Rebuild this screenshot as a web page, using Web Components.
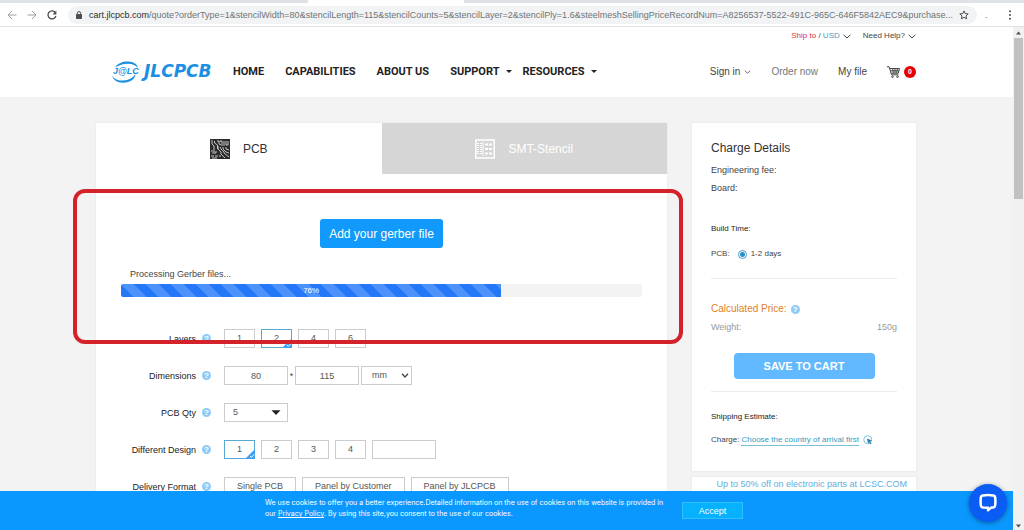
<!DOCTYPE html>
<html lang="en">
<head>
<meta charset="utf-8">
<title>JLCPCB quote</title>
<style>
html,body{margin:0;height:100%}
body{font-family:"Liberation Sans",Arial,sans-serif;font-size:9px;line-height:12px;color:#444;background:#f3f3f3}
</style>
</head>
<body>
<quote-app></quote-app>

<script>
const define = (name, html, setup) => {
  const t = document.createElement('template');
  t.innerHTML = html;
  customElements.define(name, class extends HTMLElement {
    constructor() {
      super();
      this.attachShadow({mode: 'open'}).append(t.content.cloneNode(true));
    }
    connectedCallback() {
      if (setup && !this.ready) { this.ready = true; setup(this, this.shadowRoot); }
    }
  });
};

define('help-tip', `
<style>
:host{display:block;width:9px;height:9px}
button{display:block;width:100%;height:100%;padding:0;border:0;border-radius:50%;background:#8ecbf6;color:#fff;font:bold 8px/9px "Liberation Sans",Arial,sans-serif;text-align:center}
</style>
<button type="button" aria-label="Help">?</button>`);

define('chevron-down', `
<style>
:host{display:inline-block;width:8px;height:5px}
svg{display:block;width:100%;height:100%}
</style>
<svg viewBox="0 0 8 5" fill="none" stroke="currentColor"><path d="M.6.8 4 4 7.4.8"/></svg>`);

define('browser-bar', `
<style>
:host{display:block;background:#fff;border-bottom:1px solid #dfe1e4;color:#5f6368}
.tabs{display:flex;height:3px;background:#dee1e6}
.tabs i{flex:0 0 156px;margin-left:308px;background:#fff}
.bar{display:flex;align-items:center;height:23px;padding:0 9px 0 7px}
.bar>button{flex:none;display:grid;place-items:center;width:10px;height:18px;padding:0;border:0;background:none;margin-right:10px;color:#9aa0a6}
.bar>button.on{color:#4a4d51;margin-right:11px}
.pill{flex:1;min-width:0;display:flex;align-items:center;height:18px;padding:0 8px;border-radius:9px;background:#f1f3f4}
.url{flex:1;min-width:0;margin:0 2px 0 7px;overflow:hidden;text-overflow:ellipsis;white-space:nowrap;font:9px/16px "Liberation Sans",Arial,sans-serif;color:#6f7378}
.url b{font-weight:400;color:#2b2d30}
.dot{width:28px;padding-left:8px;box-sizing:border-box}
svg{display:block;flex:none}
.bar>button.more{margin:0;color:#4a4d51}
</style>
<div class="tabs"><i></i></div>
<div class="bar">
  <button aria-label="Back"><svg width="10" height="10" viewBox="0 0 10 10" fill="none" stroke="currentColor"><path d="M9.5 5H1.2M5 1 1 5l4 4"/></svg></button>
  <button aria-label="Forward"><svg width="10" height="10" viewBox="0 0 10 10" fill="none" stroke="currentColor"><path d="M.5 5h8.3M5 1l4 4-4 4"/></svg></button>
  <button class="on" aria-label="Reload"><svg width="10" height="10" viewBox="0 0 10 10"><path d="M8.3 2.6A4 4 0 1 0 8.9 6" fill="none" stroke="currentColor" stroke-width="1.3"/><path d="M9.4.4v4H5.5z" fill="currentColor"/></svg></button>
  <div class="pill">
    <svg width="6" height="8" viewBox="0 0 6 8"><path d="M1.3 3.5V2.3a1.7 1.7 0 0 1 3.4 0v1.2" fill="none" stroke="#4a4d51"/><rect y="3" width="6" height="5" rx=".7" fill="#4a4d51"/></svg>
    <span class="url"><b>cart.jlcpcb.com</b>/quote?orderType=1&amp;stencilWidth=80&amp;stencilLength=115&amp;stencilCounts=5&amp;stencilLayer=2&amp;stencilPly=1.6&amp;steelmeshSellingPriceRecordNum=A8256537-5522-491C-965C-646F5842AEC9&amp;purchase...</span>
    <svg width="10" height="10" viewBox="0 0 10 10"><path d="m5 .9 1.2 2.7 3 .3L7 5.900l.6 2.900L5 7.300 2.400 8.800 3 5.900.8 3.900l3-.3z" fill="none" stroke="#4a4d51"/></svg>
  </div>
  <span class="dot">.</span>
  <button class="more" aria-label="Menu"><svg width="4" height="10" viewBox="0 0 4 10" fill="currentColor"><circle cx="2" cy="1.300" r="1"/><circle cx="2" cy="5" r="1"/><circle cx="2" cy="8.700" r="1"/></svg></button>
</div>`);

define('page-scrollbar', `
<style>
:host{display:flex;flex-direction:column;align-items:center;width:11px;background:#f1f1f1;padding:4px 0 2px;box-sizing:border-box}
i{width:9px;height:161px;margin:3px 0 auto;background:#c1c1c1}
svg{display:block;fill:#505050}
</style>
<svg width="5" height="4" viewBox="0 0 5 4"><path d="M0 3.500h5L2.500.5z"/></svg>
<i></i>
<svg width="5" height="4" viewBox="0 0 5 4"><path d="M0 .5h5L2.500 3.500z"/></svg>`);

define('brand-logo', `
<style>
:host{display:block;width:101px}
a{display:flex;align-items:center;gap:4px;height:23px;color:#1c8fe3;text-decoration:none}
svg{display:block;flex:none;overflow:visible}
span{font:italic bold 17px/23px "DejaVu Sans",Verdana,sans-serif}
</style>
<a href="#" aria-label="JLCPCB home">
<svg width="28" height="22" viewBox="0 0 28 22" fill="#1c8fe3">
<path d="M3 6.500C6 2 11 .3 16 .5c6 .2 9.500 3 10 6.500-2-2.500-5.500-4.300-10-4.300-5 0-9 1.500-13 3.800z"/>
<path d="M.4 14.500C2 18 6 19.800 11 19.500c6-.3 10.500-2.800 12.500-6.500 0 5-5.500 8.700-12.500 8.700-6 0-10.300-3-10.600-7.200z"/>
<text x="1" y="13" font-family="Liberation Sans,Arial,sans-serif" font-size="9" font-weight="bold" font-style="italic">J@LC</text>
</svg><span>JLCPCB</span></a>`);

define('site-header', `
<style>
:host{display:block;background:#fff;padding:0 97px 0 112px;height:70px;box-sizing:border-box}
a{color:inherit;text-decoration:none;white-space:nowrap}
.top{display:flex;justify-content:flex-end;gap:12px;height:18px;align-items:center;font-size:8px;color:#444}
.top a{display:flex;align-items:center;gap:3px}
.red{color:#d9363b}.blue{color:#4c9abf}
.main{display:flex;align-items:center;height:53px}
.links{display:flex;gap:21px;margin-left:20px;font:bold 11px/16px Roboto,Arial,sans-serif;color:#222}
.links a{display:flex;align-items:center;gap:6px}
.links a:nth-child(4){margin-right:-10px}
.links i{border:3px solid transparent;border-top-color:#222;border-bottom:0}
.user{display:flex;align-items:center;gap:20px;margin-left:auto;font-size:10px;line-height:14px;color:#444}
.user a{display:flex;align-items:center;gap:4px}
.user .dim{color:#777}
.user chevron-down{width:7px;height:4px}
b{width:12px;height:12px;border-radius:50%;background:#e60000;color:#fff;font:bold 7px/12px "Liberation Sans",Arial,sans-serif;text-align:center}
svg{display:block}
</style>
<div class="top">
  <a href="#"><span><span class="red">Ship to</span> / <span class="blue">USD</span></span><chevron-down></chevron-down></a>
  <a href="#">Need Help?<chevron-down></chevron-down></a>
</div>
<div class="main">
  <brand-logo></brand-logo>
  <nav class="links"><a href="#">HOME</a><a href="#">CAPABILITIES</a><a href="#">ABOUT US</a><a href="#">SUPPORT<i></i></a><a href="#">RESOURCES<i></i></a></nav>
  <nav class="user"><a href="#">Sign in<chevron-down></chevron-down></a><a href="#" class="dim">Order now</a><a href="#">My file</a>
  <a href="#" aria-label="Cart"><svg width="13" height="12" viewBox="0 0 13 12" fill="none" stroke="#444"><path d="M0 .8h2.200l2.300 8h7M3 2.500h9.500l-1.200 4.700H4.200M3.500 4.800h8.400M5.700 2.500l.6 4.700M8 2.500v4.700M10.300 2.500l-.6 4.700"/><circle cx="5.500" cy="10.700" r=".8"/><circle cx="10.500" cy="10.700" r=".8"/></svg><b>0</b></a></nav>
</div>`);

define('product-tabs', `
<style>
:host{display:block}
div{display:grid;grid-template-columns:1fr 1fr}
button{display:flex;align-items:center;justify-content:center;gap:13px;height:51px;padding:0;border:0;background:#d6d6d6;color:#fff;font:12px/16px "Liberation Sans",Arial,sans-serif}
button[aria-selected=true]{background:#fff;color:#333}
svg{display:block}
</style>
<div role="tablist">
<button role="tab" aria-selected="true"><svg width="20" height="20" viewBox="0 0 20 20"><rect width="20" height="20" fill="#2b2b2b"/><g fill="none" stroke="#d8d8d8" stroke-width=".9"><path d="M2 1v4l2 2v4M4.500 2v2l3 2v4M7 2h2v3l2 1M10 3v-1h2v5M14 2v5M16 2v4h2V2M8 7v3l3 3v2l4 4M10 8l1 2 3 3v1l5 4M13 8v2l3 3 3 1M16 8v2l3 1M1 12h4M2 14h4v-2M1 17h3M5 17h3M9 17h2M2 19h5"/></g></svg>PCB</button>
<button role="tab" aria-selected="false"><svg width="20" height="20" viewBox="0 0 20 20" fill="none" stroke="#fff"><rect x=".8" y="1" width="18.400" height="18" stroke-width="1.500"/><path d="M3 4v12M6 4v12" stroke-dasharray="1 1" stroke-width="2"/><path d="M8 3v14"/><path d="M10 5.500h7M10 10h7M10 14.500h7" stroke-width="2" stroke-dasharray="3 1"/></svg>SMT-Stencil</button>
</div>`);

define('upload-progress', `
<style>
:host{display:block}
p{margin:0 0 4px 9px}
.track{height:13px;background:#f3f3f3;border-radius:2px}
.fill{width:73%;height:13px;border-radius:2px 0 0 2px;color:#fff;font-size:8px;line-height:13px;text-align:center;background:linear-gradient(45deg,#4d92fa 25%,#2478f7 25%,#2478f7 50%,#4d92fa 50%,#4d92fa 75%,#2478f7 75%) 0 0/25px 25px}
</style>
<p><slot></slot></p>
<div class="track" role="progressbar" aria-valuemin="0" aria-valuemax="100"><div class="fill"></div></div>`,
(el, root) => {
  root.querySelector('.fill').textContent = el.getAttribute('value') + '%';
  root.querySelector('.track').setAttribute('aria-valuenow', el.getAttribute('value'));
});

define('form-row', `
<style>
:host{display:grid;grid-template-columns:100px 16px 1fr;gap:6px;align-items:center;height:37px}
.name{text-align:right;color:#222}
.ctl{display:flex;align-items:center}
</style>
<span class="name"><slot name="label"></slot></span><help-tip></help-tip><div class="ctl"><slot></slot></div>`);

define('choice-group', `
<style>
:host{display:flex;gap:6px}
label{position:relative;display:block;box-sizing:border-box;min-width:31px;height:19px;padding:0 13px;font-size:9px;line-height:19px;text-align:center;white-space:nowrap;color:#555}
input{position:absolute;inset:0;width:100%;height:100%;margin:0;appearance:none;border:1px solid #ccc}
input:checked{border-color:#59a9d6}
svg{display:none;position:absolute;right:0;bottom:0}
input:checked~svg{display:block}
</style>`,
(el, root) => {
  const name = el.id || 'choice';
  el.getAttribute('options').split('|').forEach((text) => {
    const label = document.createElement('label');
    label.innerHTML = '<input type="radio"><span></span><svg width="10" height="10" viewBox="0 0 10 10"><path d="M10 0v10H0z" fill="#3c9ff0"/><path d="m5 7 1.500 1.300L9 5.500" fill="none" stroke="#fff"/></svg>';
    const input = label.querySelector('input');
    input.name = name;
    input.checked = text === el.getAttribute('value');
    label.querySelector('span').textContent = text;
    root.append(label);
  });
});

define('quote-form', `
<style>
:host{display:block;position:relative;background:#fff;box-shadow:0 0 1px #ccc}
.upload{display:flex;flex-direction:column;align-items:center;padding:45px 25px 23px}
.upload button{height:29px;padding:0 9px;border:0;border-radius:3px;background:#1199fb;color:#fff;font:12px/16px "Liberation Sans",Arial,sans-serif}
upload-progress{align-self:stretch;margin-top:20px}
input,select{box-sizing:border-box;width:64px;height:19px;margin:0;padding:0 8px;border:1px solid #ccc;border-radius:0;background:#fff;color:#555;font:9px/15px "Liberation Sans",Arial,sans-serif}
input{text-align:center}
select{appearance:none}
.pick{position:relative;display:flex}
.pick svg{position:absolute;right:7px;top:7px;pointer-events:none}
.times{width:7px;text-align:center;line-height:12px}
.unit{margin-left:2px}
.unit select{width:51px;padding:0 10px}
.unit svg{right:3px}
.other{margin-left:6px}
.mark{position:absolute;inset:66px -16px auto -23px;height:155px;box-sizing:border-box;border:4px solid #d3222a;border-radius:12px;pointer-events:none}
</style>
<product-tabs></product-tabs>
<div class="upload">
  <button type="button">Add your gerber file</button>
  <upload-progress value="76">Processing Gerber files...</upload-progress>
</div>
<form>
  <form-row><span slot="label" id="l1">Layers</span><choice-group id="layers" role="radiogroup" aria-labelledby="l1" options="1|2|4|6" value="2"></choice-group></form-row>
  <form-row><label slot="label" for="w">Dimensions</label><input id="w" value="80"><span class="times">*</span><input aria-label="Length" value="115"><span class="pick unit"><select aria-label="Unit"><option>mm</option></select><svg width="8" height="5" viewBox="0 0 8 5" fill="none" stroke="#444" stroke-width="1.300"><path d="M1 .8 4 4 7 .8"/></svg></span></form-row>
  <form-row><label slot="label" for="qty">PCB Qty</label><span class="pick"><select id="qty"><option>5</option></select><svg width="10" height="5" viewBox="0 0 10 5" fill="#222"><path d="M.5.3h9L5 5z"/></svg></span></form-row>
  <form-row><span slot="label" id="l2">Different Design</span><choice-group id="design" role="radiogroup" aria-labelledby="l2" options="1|2|3|4" value="1"></choice-group><input class="other" aria-label="Other design count"></form-row>
  <form-row><span slot="label" id="l3">Delivery Format</span><choice-group id="format" role="radiogroup" aria-labelledby="l3" options="Single PCB|Panel by Customer|Panel by JLCPCB"></choice-group></form-row>
</form>
<div class="mark"></div>`);

define('charge-panel', `
<style>
:host{display:block}
section{background:#fff;box-shadow:0 0 1px #ccc;padding:17px 19px 25px}
h2{margin:0 0 8px;font-weight:400;font-size:12px;line-height:16px;color:#333}
p{margin:0 0 6px}
h3{margin:0;font-weight:400;font-size:8px;line-height:12px;color:#222}
.time{margin-top:29px}
.row{display:flex;align-items:center;font-size:8px;line-height:12px}
.build{margin:13px 0 18px;gap:8px}
label{display:flex;align-items:center;gap:4px}
input{appearance:none;box-sizing:border-box;width:9px;height:9px;margin:0;border:1px solid #3da0cf;border-radius:50%;background:radial-gradient(#2b8fc4 0 2px,#fff 3px)}
hr{height:1px;margin:0;border:0;background:#ececec}
.price{display:flex;align-items:center;gap:4px;margin:23px 0 5px;color:#df8127;font-size:10px;line-height:14px}
.weight{display:flex;justify-content:space-between;color:#999}
.save{display:block;width:141px;height:26px;margin:20px auto 12px;padding:0;border:0;border-radius:4px;background:#62b9ff;color:#fff;font:bold 11px/16px "Liberation Sans",Arial,sans-serif}
.ship{margin:19px 0 11px}
a{color:#2f9dbf;text-decoration:none}
.row a{border-bottom:1px solid #7cc0d8;margin:0 4px 0 2px;line-height:11px;white-space:nowrap}
.promo{margin-top:6px;padding:1px 9px 12px;text-align:right;white-space:nowrap}
.promo a{display:block;color:#62aedb;line-height:13px}
</style>
<section>
  <h2>Charge Details</h2>
  <p>Engineering fee:</p><p>Board:</p>
  <h3 class="time">Build Time:</h3>
  <div class="row build"><span>PCB:</span><label><input type="radio" checked>1-2 days</label></div>
  <hr>
  <div class="price">Calculated Price: <help-tip></help-tip></div>
  <div class="weight"><span>Weight:</span><span>150g</span></div>
  <button class="save" type="button">SAVE TO CART</button>
  <hr>
  <h3 class="ship">Shipping Estimate:</h3>
  <div class="row">Charge:<a href="#">Choose the country of arrival first</a><svg width="10" height="10" viewBox="0 0 10 10"><circle cx="4.700" cy="4.700" r="4" fill="none" stroke="#7cc0e0"/><path d="m4 3.500 5 2-2 1 1.500 2-1 .8-1.500-2-1 1.500z" fill="#2f7fae"/></svg></div>
</section>
<section class="promo"><a href="#">Up to 50% off on electronic parts at LCSC.COM</a></section>`);

define('cookie-notice', `
<style>
:host{display:flex;align-items:center;height:39px;padding:0 97px 0 265px;box-sizing:border-box;background:#0a98ff;color:#fff;font:7px/11px Inter,Arial,sans-serif}
p{flex:0 0 408px;margin:0 9px 5px 0}
a{color:inherit}
button{flex:none;width:61px;height:17px;padding:0;border:1px solid #2fc0ff;background:#06b2fd;color:#fff;font:9px/12px "Liberation Sans",Arial,sans-serif}
</style>
<p>We use cookies to offer you a better experience.Detailed information on the use of cookies on this website is provided in our <a href="#">Privacy Policy</a>. By using this site,you consent to the use of our cookies.</p>
<button type="button">Accept</button>`);

define('chat-button', `
<style>
:host{display:block}
button{display:grid;place-items:center;width:38px;height:38px;padding:0;border:0;border-radius:50%;background:#0a5cf5;box-shadow:0 1px 5px #0006}
</style>
<button type="button" aria-label="Chat"><svg width="20" height="20" viewBox="0 0 20 20" fill="none" stroke="#fff" stroke-width="2.500" stroke-linejoin="round"><path d="M5 2.500Q10 1.700 15 2.500q2 .3 2.200 2.200.4 4 0 7.600Q17 14 15 14.400h-1.500L10 17.300v-2.600L5 14.400Q3 14 2.800 12.300q-.4-3.600 0-7.600Q3 2.800 5 2.500z"/></svg></button>`);

define('quote-app', `
<style>
:host{display:flex;flex-direction:column;height:100vh;overflow:hidden}
.view{flex:1;min-height:0;display:flex}
.page{position:relative;flex:1;min-width:0;display:flex;flex-direction:column}
.scroll{flex:1;min-height:0;overflow:hidden}
main{display:grid;grid-template-columns:1fr 224px;gap:25px;align-items:start;padding:26px 97px 0 96px}
chat-button{position:absolute;right:6px;bottom:8px}
</style>
<browser-bar></browser-bar>
<div class="view">
  <div class="page">
    <div class="scroll"><site-header></site-header><main><quote-form></quote-form><charge-panel></charge-panel></main></div>
    <cookie-notice></cookie-notice>
    <chat-button></chat-button>
  </div>
  <page-scrollbar></page-scrollbar>
</div>`);
</script>
</body>
</html>
